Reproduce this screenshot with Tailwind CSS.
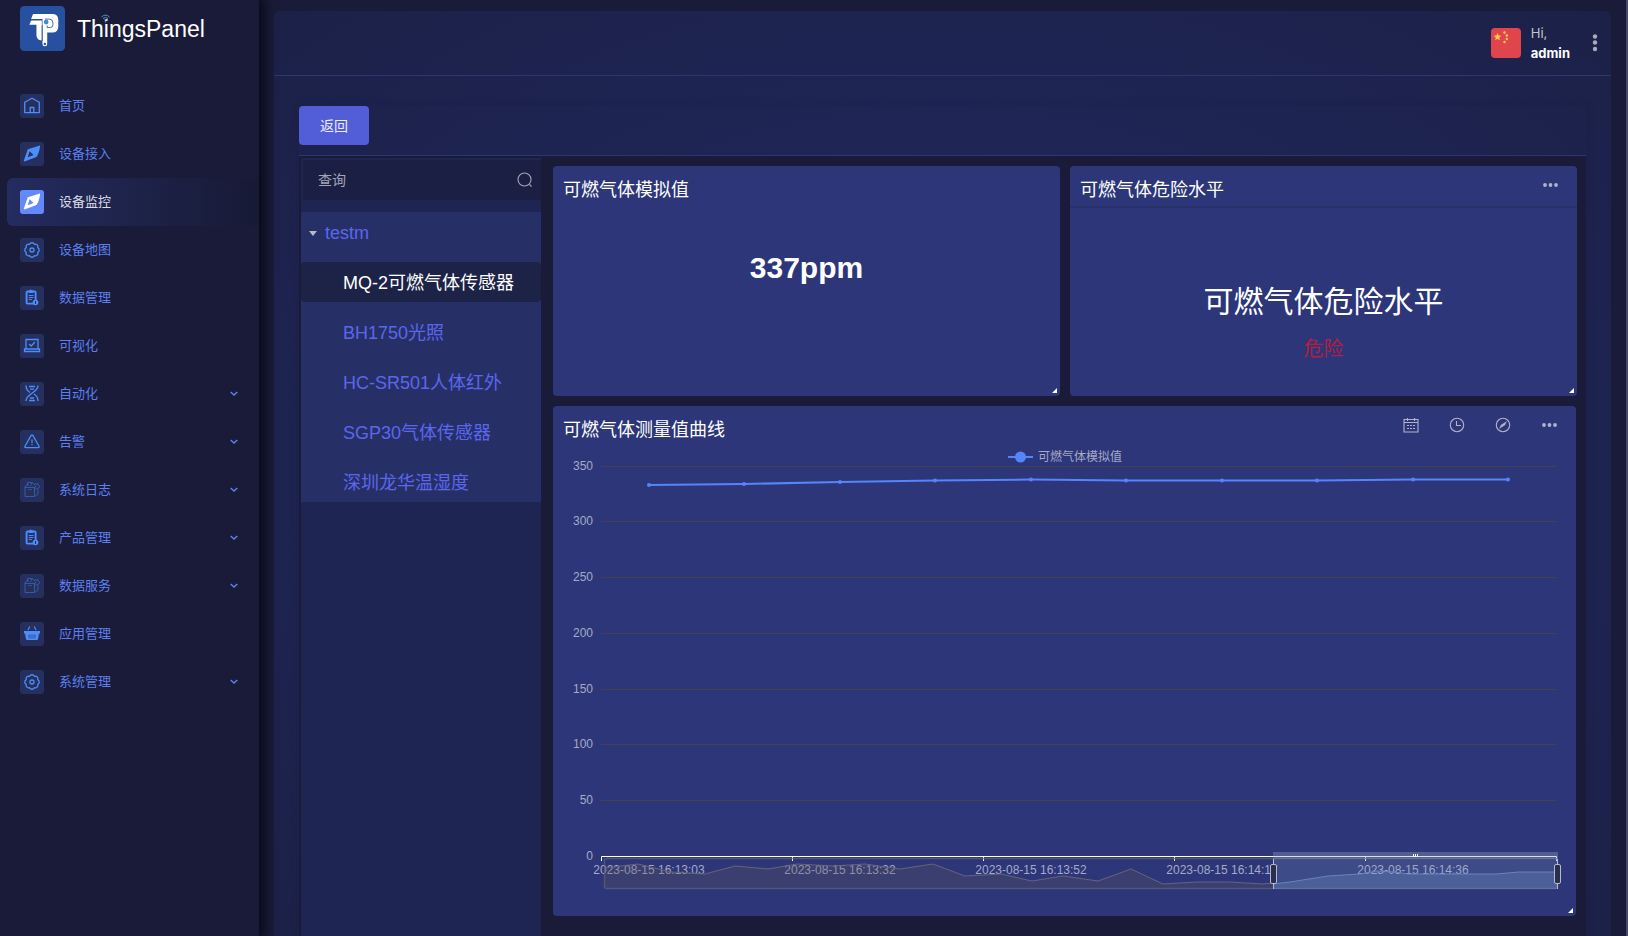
<!DOCTYPE html>
<html lang="zh-CN">
<head>
<meta charset="utf-8">
<title>ThingsPanel</title>
<script src="https://cdn.jsdelivr.net/npm/@tailwindcss/browser@4"></script>
</head>
<body class="flex min-h-screen border-r-2 border-[#474a68] bg-[#191b38] font-['Liberation_Sans','Noto_Sans_CJK_SC',sans-serif] text-white">

<svg class="hidden" aria-hidden="true">
  <symbol id="home" viewBox="0 0 24 24"><path d="M4.700 8.300 12 4.200l7.300 4.100v10.300H4.700zM10.200 18.500v-5h3.600v5" fill="none" stroke="currentColor" stroke-width="1.300" stroke-linejoin="round"/></symbol>
  <symbol id="compass" viewBox="0 0 24 24"><path fill="currentColor" fill-rule="evenodd" d="M20 3.500c.1 2.800-1.200 8.300-3.600 11.500L5.200 19.300c-1 .3-1.500-.3-1.200-1.300L7.800 7.300zM9.600 9.300l-1.900 5.900 5.900-2.200z"/></symbol>
  <symbol id="gear" viewBox="0 0 24 24"><g fill="none" stroke="currentColor" stroke-width="1.300" stroke-linejoin="round"><path d="M17.730 9.630a2.600 2.600 0 0 1 0 4.740a2.600 2.600 0 0 1-3.360 3.360a2.600 2.600 0 0 1-4.740 0a2.600 2.600 0 0 1-3.360-3.360a2.600 2.600 0 0 1 0-4.740a2.600 2.600 0 0 1 3.360-3.360a2.600 2.600 0 0 1 4.740 0a2.600 2.600 0 0 1 3.360 3.360z"/><circle cx="12" cy="12" r="2"/></g></symbol>
  <symbol id="clip" viewBox="0 0 24 24"><g fill="none" stroke="currentColor"><rect x="6.600" y="5.400" width="9" height="12.200" rx="1" stroke-width="1.900"/><path d="M8.800 9.500h4.600M8.800 11.500h4.600M8.800 13.500h3" stroke-width="1.200"/></g><path d="M8.500 4.500h1.200c.4-1.200 1.700-1.200 2.100 0h1.700V7h-5z" fill="currentColor"/><circle cx="15.500" cy="16.500" r="2.800" fill="currentColor"/><path d="M15.500 15v3" stroke="#25305f"/></symbol>
  <symbol id="laptop" viewBox="0 0 24 24"><path d="M6 15V5.500h12V15M4.500 15h15v2.500h-15zM9 10l2.200 2 3.800-4" fill="none" stroke="currentColor" stroke-width="1.300"/></symbol>
  <symbol id="dna" viewBox="0 0 24 24"><path d="M6 3.500c0 3.500 1.500 5.500 4 7M18 3.500C18 11 6 11.500 6 19M18 19c0-3.500-1.500-5.500-4-7M9 4.500h6M10 7.200h4M10 16h4M9 18.500h6" fill="none" stroke="currentColor" stroke-width="1.300"/></symbol>
  <symbol id="warn" viewBox="0 0 24 24"><path d="M11 5.600q1-1.500 2 0l6 10.600q.7 1.300-.8 1.400H5.800q-1.500-.1-.8-1.400zM12 9.500v3.500M12 14v1.300" fill="none" stroke="currentColor" stroke-width="1.300"/></symbol>
  <symbol id="box" viewBox="0 0 24 24"><path d="M5 9.500h9.500v9H5zM14.500 9.500l2-2M14.500 18.500l3.500-2.500v-4M4.500 9.500l2-2.500h2.500M8.500 11.500h3M7.500 7.500V4.500h4.500L10.500 8M12 4.500l2.500 2M14 6.500l3.500-1 2 3.500-2.500 3M15 12c-1.500-2 2-3 2-1" fill="none" stroke="currentColor" stroke-width=".8"/></symbol>
  <symbol id="basket" viewBox="0 0 24 24"><path d="M4 9h16v2.500h-1L18 17q-.2 1-1.200 1H7.200q-1 0-1.200-1l-1-5.500H4z" fill="currentColor"/><path d="M8 8l1.800-3.500M16 8l-1.800-3.500" stroke="currentColor" stroke-width="1.200"/><path d="M9 12.500v4M11 12.500v4M13 12.500v4M15 12.500v4" stroke="#25305f" stroke-width=".7"/></symbol>
  <symbol id="chev" viewBox="0 0 8 8"><path d="M.7 2l3.300 3 3.300-3" fill="none" stroke="currentColor" stroke-width="1.500"/></symbol>
  <symbol id="dots" viewBox="0 0 16 22"><g fill="currentColor"><circle cx="3" cy="11" r="1.900"/><circle cx="8.500" cy="11" r="1.900"/><circle cx="14" cy="11" r="1.900"/></g></symbol>
  <symbol id="grip" viewBox="0 0 5 5"><path d="M5 0v5H0z" fill="#fff"/></symbol>
</svg>

<aside class="z-10 w-[259px] shrink-0 bg-[#191b38] shadow-[0_0_12px_3px_#04050d]">
  <a href="#" class="flex items-center gap-3 pt-[6px] pl-5">
    <svg class="size-[45px]" viewBox="60 18 134 134"><rect x="60" y="18" width="134" height="134" rx="13" fill="#2850a0"/>
      <path d="M99 42H156Q174 42 174 59V79Q174 97 156 97H141V130H127V57H93Z" fill="#fff"/>
      <path d="M88 74 93 61H125V121Q109 119 109 104V74Z" fill="#fff"/>
      <path d="M134 57H147Q158 57 158 68V74Q158 82 150 82H141V76" fill="none" stroke="#2850a0" stroke-width="2.500"/>
      <path d="M126 76V122" stroke="#2850a0" stroke-width="2.500"/>
      <circle cx="134" cy="131" r="7" fill="#fff"/><circle cx="134" cy="131" r="3.500" fill="#2850a0"/><circle cx="138" cy="66" r="7" fill="#3d8cc4"/></svg>
    <span class="relative text-[23px] leading-8">ThingsPanel
      <svg class="absolute top-[1px] left-[24px] h-[9px] w-[9px]" viewBox="0 0 9 9" fill="none" stroke="#4a9bd0"><path d="M.5 3Q4.500-.8 8.500 3M2 4.500Q4.500 2.300 7 4.500M3.300 6Q4.500 5 5.700 6"/><circle cx="4.500" cy="7.800" r=".5"/></svg>
    </span>
  </a>
  <nav class="mt-[31px] pl-[7px] text-[13px] text-[#5b80f0]">
    <a href="#" class="flex h-12 items-center pr-[21px] pl-[13px]"><svg class="mr-[15px] size-6 rounded-[3px] bg-[#25305f] text-[#4d8dfb]"><use href="#home"/></svg><span class="flex-1">首页</span></a>
    <a href="#" class="flex h-12 items-center pr-[21px] pl-[13px]"><svg class="mr-[15px] size-6 rounded-[3px] bg-[#25305f] text-[#4d8dfb]"><use href="#compass"/></svg><span class="flex-1">设备接入</span></a>
    <a href="#" aria-current="page" class="flex h-12 items-center rounded-l-md bg-linear-to-r from-[#242c60] to-[#171a35] pr-[21px] pl-[13px] text-[#dcdde6]"><svg class="mr-[15px] size-6 rounded-[3px] bg-[#6389ff] text-white"><use href="#compass"/></svg><span class="flex-1">设备监控</span></a>
    <a href="#" class="flex h-12 items-center pr-[21px] pl-[13px]"><svg class="mr-[15px] size-6 rounded-[3px] bg-[#25305f] text-[#4d8dfb]"><use href="#gear"/></svg><span class="flex-1">设备地图</span></a>
    <a href="#" class="flex h-12 items-center pr-[21px] pl-[13px]"><svg class="mr-[15px] size-6 rounded-[3px] bg-[#25305f] text-[#4d8dfb]"><use href="#clip"/></svg><span class="flex-1">数据管理</span></a>
    <a href="#" class="flex h-12 items-center pr-[21px] pl-[13px]"><svg class="mr-[15px] size-6 rounded-[3px] bg-[#25305f] text-[#4d8dfb]"><use href="#laptop"/></svg><span class="flex-1">可视化</span></a>
    <a href="#" class="flex h-12 items-center pr-[21px] pl-[13px]"><svg class="mr-[15px] size-6 rounded-[3px] bg-[#25305f] text-[#4d8dfb]"><use href="#dna"/></svg><span class="flex-1">自动化</span><svg class="size-2"><use href="#chev"/></svg></a>
    <a href="#" class="flex h-12 items-center pr-[21px] pl-[13px]"><svg class="mr-[15px] size-6 rounded-[3px] bg-[#25305f] text-[#4d8dfb]"><use href="#warn"/></svg><span class="flex-1">告警</span><svg class="size-2"><use href="#chev"/></svg></a>
    <a href="#" class="flex h-12 items-center pr-[21px] pl-[13px]"><svg class="mr-[15px] size-6 rounded-[3px] bg-[#25305f] text-[#3c64b4]"><use href="#box"/></svg><span class="flex-1">系统日志</span><svg class="size-2"><use href="#chev"/></svg></a>
    <a href="#" class="flex h-12 items-center pr-[21px] pl-[13px]"><svg class="mr-[15px] size-6 rounded-[3px] bg-[#25305f] text-[#4d8dfb]"><use href="#clip"/></svg><span class="flex-1">产品管理</span><svg class="size-2"><use href="#chev"/></svg></a>
    <a href="#" class="flex h-12 items-center pr-[21px] pl-[13px]"><svg class="mr-[15px] size-6 rounded-[3px] bg-[#25305f] text-[#3c64b4]"><use href="#box"/></svg><span class="flex-1">数据服务</span><svg class="size-2"><use href="#chev"/></svg></a>
    <a href="#" class="flex h-12 items-center pr-[21px] pl-[13px]"><svg class="mr-[15px] size-6 rounded-[3px] bg-[#25305f] text-[#4d8dfb]"><use href="#basket"/></svg><span class="flex-1">应用管理</span></a>
    <a href="#" class="flex h-12 items-center pr-[21px] pl-[13px]"><svg class="mr-[15px] size-6 rounded-[3px] bg-[#25305f] text-[#4d8dfb]"><use href="#gear"/></svg><span class="flex-1">系统管理</span><svg class="size-2"><use href="#chev"/></svg></a>
  </nav>
</aside>

<main class="flex min-w-0 flex-1 flex-col px-[15px] pt-[11px]">
  <div class="flex flex-1 flex-col rounded-t-md bg-[#1f2553] bg-[radial-gradient(ellipse_at_50%_50%,#1f2657_40%,#1c2148_100%)]">
    <header class="flex h-[65px] items-center justify-end border-b border-[#2b3770] pr-3">
      <svg class="mr-[10px] size-[30px] rounded" viewBox="0 0 30 30"><path fill="#e0454d" d="M0 0h30v30H0z"/><path fill="#fbd14b" d="M6.500 5l1 2.600 2.800.2-2.100 1.700.7 2.700-2.400-1.500-2.300 1.500.7-2.700-2.200-1.700 2.800-.2z"/><g fill="#fbd14b"><circle cx="13.500" cy="4.500" r="1.200"/><circle cx="15.800" cy="7.500" r="1.200"/><circle cx="15.800" cy="11" r="1.200"/><circle cx="13.500" cy="14" r="1.200"/></g></svg>
      <div class="font-['Inter',sans-serif] text-[13px] leading-5 text-[#c4c5cf]">Hi,<br><b class="font-bold text-white">admin</b></div>
      <button aria-label="更多" class="ml-[21px] text-[#a9abc0]"><svg class="h-5 w-2" viewBox="0 0 8 20" fill="currentColor"><circle cx="4" cy="3.500" r="2.200"/><circle cx="4" cy="9.500" r="2.200"/><circle cx="4" cy="16" r="2.200"/></svg></button>
    </header>

    <div class="mx-[25px] mt-[30px] flex flex-1 flex-col shadow-[0_0_8px_#1a1d3e40]">
      <div class="border-b border-[#2b3770] pb-[10px]">
        <button class="h-[39px] w-[70px] rounded bg-[#525dd8] text-sm text-[#eeeefa]">返回</button>
      </div>
      <div class="flex flex-1 bg-[#191b38] pt-[2px] pl-[2px]">
        <section class="w-60 shrink-0 bg-[#1f2552]">
          <label class="mt-[2px] ml-[2px] flex h-10 items-center rounded-l bg-[#1b1f44] pr-2 pl-[15px]">
            <input aria-label="查询" placeholder="查询" class="min-w-0 flex-1 bg-transparent text-sm outline-none placeholder:text-[#a4a6b6]">
            <svg class="size-4 text-[#a4a6b6]" viewBox="0 0 16 16" fill="none" stroke="currentColor" stroke-width="1.100"><circle cx="7.500" cy="7.500" r="6.500"/><path d="M12.500 12.500l2 2"/></svg>
          </label>
          <ul class="mt-3 flex flex-col gap-[10px] bg-[#273066] text-lg text-[#5b66ee]">
            <li><button class="flex h-10 w-full items-center pt-[2px] pl-[8px]"><svg class="mr-2 h-[5px] w-2" viewBox="0 0 8 5"><path d="M0 0h8L4 5z" fill="#b9bac8"/></svg>testm</button></li>
            <li><button class="h-10 w-full rounded bg-[#1d2347] pt-[2px] pl-[42px] text-left text-white">MQ-2可燃气体传感器</button></li>
            <li><button class="h-10 w-full pt-[2px] pl-[42px] text-left">BH1750光照</button></li>
            <li><button class="h-10 w-full pt-[2px] pl-[42px] text-left">HC-SR501人体红外</button></li>
            <li><button class="h-10 w-full pt-[2px] pl-[42px] text-left">SGP30气体传感器</button></li>
            <li><button class="h-10 w-full pt-[2px] pl-[42px] text-left">深圳龙华温湿度</button></li>
          </ul>
        </section>

        <section class="grid min-w-0 flex-1 grid-cols-2 content-start gap-[10px] pt-2 pr-[9px] pb-5 pl-3">
          <article class="relative h-[230px] rounded bg-[#2c3679]">
            <h2 class="h-[42px] pt-2 pl-[10px] text-lg leading-8">可燃气体模拟值</h2>
            <p class="pt-10 text-center text-[30px] leading-10 font-bold">337ppm</p>
            <svg class="absolute right-[3px] bottom-[3px] size-[5px]"><use href="#grip"/></svg>
          </article>
          <article class="relative h-[230px] rounded bg-[#2c3679]">
            <div class="flex h-[42px] items-start justify-between border-b-2 border-[#293169] pt-2 pr-[19px] pl-[10px]">
              <h2 class="text-lg leading-8">可燃气体危险水平</h2>
              <button aria-label="更多" class="text-[#b1b4c8]"><svg class="h-[22px] w-4"><use href="#dots"/></svg></button>
            </div>
            <p class="pt-[74px] text-center text-[30px] leading-10">可燃气体危险水平</p>
            <p class="pt-[13px] text-center text-xl leading-7 text-[#b21f41]">危险</p>
            <svg class="absolute right-[3px] bottom-[3px] size-[5px]"><use href="#grip"/></svg>
          </article>

          <article class="relative col-span-2 mr-px rounded bg-[#2c3679]">
            <div class="flex h-[42px] items-start pt-2 pr-[19px] pl-[10px] text-[#b1b4c8]">
              <h2 class="flex-1 text-lg leading-8 text-white">可燃气体测量值曲线</h2>
              <div class="flex gap-[30px]">
                <button aria-label="日期"><svg class="h-[22px] w-4" viewBox="0 0 16 22" fill="none" stroke="currentColor" stroke-width="1.100"><path d="M1 5.500h14v12.500H1zM1 8.500h14M4.500 4v3M11.500 4v3"/><path d="M4 11.500h8.500M4 14.500h8.500" stroke-dasharray="2 1"/></svg></button>
                <button aria-label="时间"><svg class="h-[22px] w-4" viewBox="0 0 16 22" fill="none" stroke="currentColor" stroke-width="1.100"><circle cx="8" cy="11" r="6.700"/><path d="M7.500 7v4.500H12"/></svg></button>
                <button aria-label="探索"><svg class="h-[22px] w-4" viewBox="0 0 16 22" fill="none" stroke="currentColor" stroke-width="1.100"><circle cx="8" cy="11" r="6.700"/><path d="M11.500 7.500L6 11l-1.500 3.500L10 11z" fill="currentColor" stroke-width=".3"/></svg></button>
                <button aria-label="更多"><svg class="h-[22px] w-4"><use href="#dots"/></svg></button>
              </div>
            </div>
            <svg class="block w-full text-xs" viewBox="0 0 1023 468" role="img" aria-label="可燃气体测量值曲线">
              <path d="M455 9h25" stroke="#5585fb" stroke-width="2"/><circle cx="467.500" cy="9" r="5.500" fill="#5585fb"/>
              <g fill="#a6aac5">
                <text x="485" y="13">可燃气体模拟值</text>
                <g text-anchor="end"><text x="40" y="22">350</text><text x="40" y="77">300</text><text x="40" y="133">250</text><text x="40" y="189">200</text><text x="40" y="245">150</text><text x="40" y="300">100</text><text x="40" y="356">50</text><text x="40" y="412">0</text></g>
                <g text-anchor="middle"><text x="96" y="426">2023-08-15 16:13:03</text><text x="287" y="426">2023-08-15 16:13:32</text><text x="478" y="426">2023-08-15 16:13:52</text><text x="669" y="426">2023-08-15 16:14:17</text><text x="860" y="426">2023-08-15 16:14:36</text></g>
              </g>
              <path d="M48 18.500h955M48 73.500h955M48 129.500h955M48 185.500h955M48 241.500h955M48 296.500h955M48 352.500h955" stroke="#44424f"/>
              <path d="M48.500 413v-4.500H1003.500v4.500M239.500 408v5M430.500 408v5M621.500 408v5M812.500 408v5" fill="none" stroke="#fff"/>
              <polyline points="96,37 191,36 287,34 382,32.500 478,31.500 573,32.500 669,32.500 764,32.500 860,31.500 955,31.500" fill="none" stroke="#5585fb" stroke-width="2"/>
              <g fill="#5585fb"><circle cx="96" cy="37" r="2"/><circle cx="191" cy="36" r="2"/><circle cx="287" cy="34" r="2"/><circle cx="382" cy="32.500" r="2"/><circle cx="478" cy="31.500" r="2"/><circle cx="573" cy="32.500" r="2"/><circle cx="669" cy="32.500" r="2"/><circle cx="764" cy="32.500" r="2"/><circle cx="860" cy="31.500" r="2"/><circle cx="955" cy="31.500" r="2"/></g>
              <path d="M719 414h5v18h-5z" fill="#2c3679"/>
              <g transform="translate(0 -1)">
                <rect x="51.500" y="411.500" width="953" height="30" rx="2" fill="none" stroke="#62627e" stroke-opacity=".7" stroke-width="1.500"/>
                <path d="M51 421 85 417 118 425 152 427 182 419 215 422 244 417 280 419 312 417 347 422 380 417 412 429 448 427 479 434 510 429 545 434 578 422 610 437 644 435 677 435 710 437 720 436V441H51z" fill="#5c5658" fill-opacity=".3"/>
                <path d="M51 421 85 417 118 425 152 427 182 419 215 422 244 417 280 419 312 417 347 422 380 417 412 429 448 427 479 434 510 429 545 434 578 422 610 437 644 435 677 435 710 437 720 436" fill="none" stroke="#66647a"/>
                <path d="M720 405h285v37H720z" fill="#87a2ce" fill-opacity=".2"/>
                <path d="M720 405h285v7H720z" fill="#a7a9b6" fill-opacity=".2"/>
                <path d="M720 437 737 435 775 429 807 427 824 424 841 425 855 427 943 427 966 425 1005 425V442H720z" fill="#6f8fc0" fill-opacity=".3"/>
                <path d="M720 437 737 435 775 429 807 427 824 424 841 425 855 427 943 427 966 425 1005 425" fill="none" stroke="#6783c2"/>
                <path d="M860.500 407v3M862.500 407v3M864.500 407v3" stroke="#fff"/>
                <path d="M720.500 412v30M1004.500 412v30" stroke="#b3b9d1"/>
                <rect x="717.500" y="417.500" width="6" height="19" rx="1.500" fill="#2b2f4b" stroke="#b3b9d1"/><rect x="1001.500" y="417.500" width="6" height="19" rx="1.500" fill="#2b2f4b" stroke="#b3b9d1"/>
              </g>
            </svg>
            <svg class="absolute right-[3px] bottom-[3px] size-[5px]"><use href="#grip"/></svg>
          </article>
        </section>
      </div>
    </div>
  </div>
</main>
</body>
</html>
